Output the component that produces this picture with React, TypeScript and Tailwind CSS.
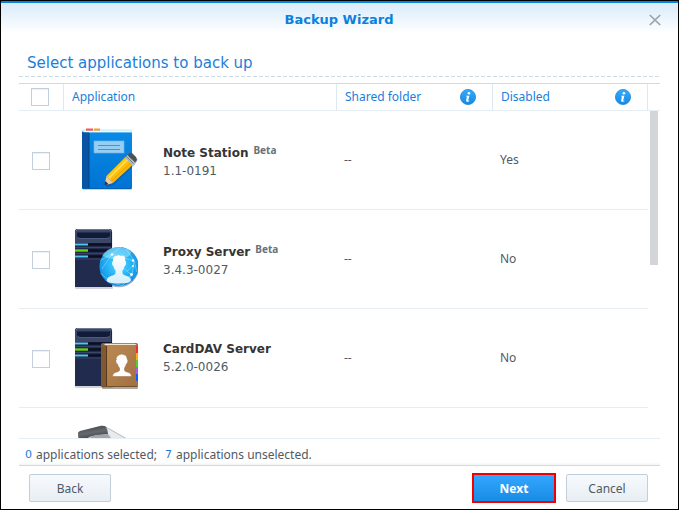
import type { ReactNode } from "react";
import { useState } from "react";

const iconClass = "block size-16 shrink-0";

function NoteIcon() {
  return (
    <svg className={iconClass} viewBox="0 0 64 64" aria-hidden="true">
      <defs>
        <linearGradient id="noteCover" x1="0" y1="0" x2="0" y2="1">
          <stop offset="0" stopColor="#0a8ae6" />
          <stop offset="1" stopColor="#0073d3" />
        </linearGradient>
        <linearGradient id="pencilBody" x1="0" y1="0" x2="1" y2="1">
          <stop offset="0" stopColor="#ffd633" />
          <stop offset="0.5" stopColor="#ffc107" />
          <stop offset="1" stopColor="#f08f00" />
        </linearGradient>
      </defs>
      <rect x="9" y="59" width="49" height="3" rx="1" fill="#9aa3ad" opacity="0.5" />
      <rect x="8" y="1.5" width="50" height="6" rx="1.5" fill="#bfeaf8" />
      <rect x="10" y="2.5" width="47" height="1.5" fill="#e9fbff" />
      <rect x="12" y="0.5" width="7" height="2.2" fill="#f05a5a" />
      <rect x="20" y="0.5" width="6" height="2.2" fill="#f5a02a" />
      <path d="M8 3.5 q1 1 3 1 H58 V59.5 q0 1.5 -1.5 1.5 H9.5 Q8 61 8 59.5z" fill="url(#noteCover)" />
      <path d="M8 3.5 q1 1 3 1 H15 V61 H9.5 Q8 61 8 59.5z" fill="#0755a3" />
      <path d="M15 5V61" stroke="#04478f" strokeWidth="1" />
      <path d="M9 60.5H57" stroke="#0560b8" />
      <rect x="20" y="13" width="30" height="12" fill="#96cdf3" stroke="#72b6e8" strokeWidth="0.6" />
      <path d="M24 17.5H46M24 21.5H46" stroke="#568fba" strokeWidth="1.2" />
      <path d="M32 58 L39 56 L60 36 L63 31" fill="none" stroke="#003d80" strokeWidth="2" opacity="0.3" />
      <path d="M51 29.5 L58.5 37 L39 55 L32.5 48z" fill="url(#pencilBody)" />
      <path d="M53.4 31.8 L34.6 50.3" stroke="#ffe05a" strokeWidth="1.5" />
      <path d="M56.5 35 L37 53.5" stroke="#e89400" strokeWidth="0.8" />
      <path d="M32.5 48 L39 55 L32 57 Q30.5 57 31 55z" fill="#f5c8a0" />
      <path d="M31.4 53 L34.5 56.2 L31.6 57 Q30.5 57 30.8 55.5z" fill="#26303b" />
      <path d="M51 29.5 L53.5 27 L61 34.5 L58.5 37z" fill="#b5bcc3" />
      <path d="M52.2 28.3 L59.8 35.8" stroke="#68717a" strokeWidth="0.8" />
      <path d="M53.5 27 L55.5 25.2 Q57 24.3 58.5 25.4 L62 29 Q63.5 31 62.5 33 L61 34.5z" fill="#4b5157" />
    </svg>
  );
}

function ServerTower() {
  return (
    <>
      <rect x="1" y="58" width="38" height="4" rx="1" fill="#9aa0ab" opacity="0.45" />
      <path d="M1 4.5 Q1 2 3.5 2 H35.5 Q38 2 38 4.5 V60 H1z" fill="#202b4d" />
      <path d="M1 4.5 Q1 2 3.5 2 H35.5 Q38 2 38 4.5 V16 H1z" fill="#3b4668" />
      <path d="M2 4 Q2.5 2.5 4 2.5 H35 Q36.5 2.5 37 4" fill="none" stroke="#6d7896" />
      <path d="M3 5.5 H36 V8 Q36 11 33 11 H6 Q3 11 3 8z" fill="#101b38" />
      <path d="M4 10.5 Q5 11.5 7 11.5 H32 Q34 11.5 35 10.5" fill="none" stroke="#56618a" strokeWidth="0.7" />
      <path d="M1 17.5 H38 M1 23.5 H38 M1 29.5 H38" stroke="#0b1020" strokeWidth="2.4" />
      <path d="M1 20.5 H38 M1 26.5 H38 M1 32 H38" stroke="#39456b" strokeWidth="1" />
      <path d="M1 17.5 H14 M1 29.5 H14" stroke="#4cc9f5" strokeWidth="2" />
      <path d="M1 23.5 H14" stroke="#66d60d" strokeWidth="2.4" />
      <path d="M37.6 5V60" stroke="#131b36" strokeWidth="0.8" />
    </>
  );
}

function ProxyIcon() {
  return (
    <svg className={iconClass} viewBox="0 0 64 64" aria-hidden="true">
      <defs>
        <radialGradient id="proxyGlobe" cx="0.5" cy="0.45" r="0.6">
          <stop offset="0" stopColor="#5fd6ff" />
          <stop offset="0.5" stopColor="#25b6f6" />
          <stop offset="0.85" stopColor="#1495e6" />
          <stop offset="1" stopColor="#0b6cc4" />
        </radialGradient>
        <linearGradient id="proxyPerson" x1="0" y1="0" x2="0" y2="1">
          <stop offset="0" stopColor="#ffffff" />
          <stop offset="1" stopColor="#d5effb" />
        </linearGradient>
        <clipPath id="proxyClip">
          <circle cx="45" cy="39.5" r="20" />
        </clipPath>
      </defs>
      <ServerTower />
      <circle cx="45" cy="40.2" r="20" fill="#0a3d78" opacity="0.4" />
      <circle cx="45" cy="39.5" r="19.5" fill="url(#proxyGlobe)" />
      <g clipPath="url(#proxyClip)">
        <ellipse cx="42" cy="26" rx="15" ry="6" fill="#b7f2ff" opacity="0.45" />
        <path
          d="M24 35 L38 27 L47 20 M38 27 L28 42 M38 27 L60 34 M52 22 L60 34 L63 45 M60 34 L58 48 L46 54 M59 39 L53 44 M58 48 L50 42 M26 46 L36 54 L48 59 L58 48"
          fill="none"
          stroke="#d4f7ff"
          strokeWidth="0.6"
          opacity="0.6"
        />
        <path
          d="M39 31 Q40 28.5 43 29 L44.5 28 L46 28.8 H50 Q51.5 30 51.3 34 Q52.6 34.5 52 37 Q51.6 39 50.5 39.2 Q50 42 48.5 43.5 V46.5 Q49 48 52 48.8 Q56.5 50 57 53 Q57 56.5 45 56.5 Q33 56.5 32.5 53.5 Q33 50 38 48.7 Q41 48 41.5 46.5 V43.5 Q40 42 39.5 39.2 Q38.2 38.5 38 36.5 Q38 34.5 39 34z"
          fill="url(#proxyPerson)"
        />
      </g>
      <g fill="#ffffff">
        <circle cx="38" cy="27.5" r="1.3" />
        <circle cx="59" cy="33.5" r="1.2" />
        <circle cx="59" cy="39" r="1" />
        <circle cx="57.5" cy="47.5" r="1.4" />
      </g>
    </svg>
  );
}

function CardIcon() {
  return (
    <svg className={iconClass} viewBox="0 0 64 64" aria-hidden="true">
      <defs>
        <linearGradient id="cardCover" x1="0" y1="0" x2="1" y2="1">
          <stop offset="0" stopColor="#bd8c55" />
          <stop offset="1" stopColor="#a17040" />
        </linearGradient>
      </defs>
      <ServerTower />
      <rect x="28" y="59" width="36" height="4" rx="1" fill="#4a4038" opacity="0.45" />
      <path d="M27 19 Q27 17 29 17 H62 Q64 17 64 19 V22 H27z" fill="#8f6339" />
      <path d="M31 17.8 H61 L63 19.2 H30z" fill="#f5e8d7" />
      <rect x="60" y="20" width="4" height="7" fill="#ef3030" />
      <rect x="60" y="27" width="4" height="7" fill="#ffac12" />
      <rect x="60" y="34" width="4" height="7" fill="#55cc30" />
      <rect x="60" y="41" width="4" height="7" fill="#a45cf0" />
      <rect x="60" y="48" width="4" height="7" fill="#1960e8" />
      <path d="M27 18.5 Q28 19.4 30 19.4 H60 Q62 19.4 62 21 V55 H64 V60 Q64 61 62.5 61 H28.5 Q27 61 27 59.5z" fill="url(#cardCover)" />
      <path d="M27 18.5 Q28 19.4 32 19.4 V61 H28.5 Q27 61 27 59.5z" fill="#805931" />
      <path d="M32.5 20V61" stroke="#593a20" strokeWidth="1" />
      <path d="M28 60.5H63" stroke="#765027" />
      <path
        d="M42 32.5 Q43 29 46 28.5 Q48 27.5 50 28.8 Q53 29 53.2 33 Q54.3 34 53.7 36 Q53.3 37.7 52.3 38 Q51.8 40.5 50.5 42 V44.5 Q51 45.7 54 46.3 Q57.5 47 57.5 50.5 H38.5 Q38.5 47 42 46.2 Q45 45.5 45.5 44.5 V42 Q43.8 40.5 43.4 38 Q42 37.5 41.8 35.5 Q41.7 34 42.5 33.5z"
        fill="#fdfcfa"
        stroke="#936a3e"
        strokeWidth="0.5"
      />
    </svg>
  );
}

function ScrollIcon() {
  return (
    <svg className={iconClass} viewBox="0 0 64 64" aria-hidden="true">
      <defs>
        <linearGradient id="rollDark" x1="0.3" y1="0" x2="0.6" y2="1">
          <stop offset="0" stopColor="#3f4246" />
          <stop offset="0.4" stopColor="#66696d" />
          <stop offset="1" stopColor="#25282b" />
        </linearGradient>
      </defs>
      <path d="M29 1 L34 3 L53 14 L60 40 H14 L10 14z" fill="#e9eaec" />
      <path d="M31 1.5 L53 14" fill="none" stroke="#a8abae" strokeWidth="0.8" />
      <path d="M4 8 Q4 7 6 6 L27 0.8 Q31 0.5 32 2 Q34 5 34 9 L19 11 Q12 12 11 18 L6 17 Q4 14 4 8z" fill="url(#rollDark)" />
      <path d="M34 9 L22 10 Q15 11 13 17 H40z" fill="#a3a7ab" />
    </svg>
  );
}

function InfoButton({ label }: { label: string }) {
  return (
    <button type="button" aria-label={label} className="block size-4 rounded-full">
      <svg className="size-4" viewBox="0 0 16 16" aria-hidden="true">
        <defs>
          <linearGradient id="infoFill" x1="0" y1="0" x2="0" y2="1">
            <stop offset="0" stopColor="#36a9fb" />
            <stop offset="1" stopColor="#128be6" />
          </linearGradient>
        </defs>
        <circle cx="8" cy="8" r="7.6" fill="url(#infoFill)" stroke="#1481d2" strokeWidth="0.7" />
        <circle cx="8.9" cy="4.3" r="1.3" fill="#fff" />
        <path d="M6.2 6.7 H9.4 L8.2 11.2 Q8.1 12 9.5 11.4 L9.3 12.2 Q6 13.8 6.1 11.4 L7 7.6 H6z" fill="#fff" />
      </svg>
    </button>
  );
}

type Application = {
  name: string;
  version: string;
  beta?: boolean;
  disabled: string;
  icon: ReactNode;
};

const applications: Application[] = [
  { name: "Note Station", version: "1.1-0191", beta: true, disabled: "Yes", icon: <NoteIcon /> },
  { name: "Proxy Server", version: "3.4.3-0027", beta: true, disabled: "No", icon: <ProxyIcon /> },
  { name: "CardDAV Server", version: "5.2.0-0026", disabled: "No", icon: <CardIcon /> },
  { name: "", version: "", disabled: "", icon: <ScrollIcon /> },
];

const TOTAL = 7;

const checkbox =
  "block size-[18px] appearance-none border border-[#c3cfdd] bg-white shadow-[inset_0_1px_1px_#eef1f4] checked:bg-[#2196f3]";
const th = "h-[27px] border-b border-[#e6eef5] p-0 text-left font-normal text-[#1a7edb]";
const thDivided = "border-r border-r-[#dce8f2]";
const td = "h-[99px] border-b border-[#e8edf2]";
const plainButton =
  "h-7 w-[82px] rounded-xs border border-[#c3cedb] bg-linear-to-b from-[#f7fafd] to-[#e8eef3] pt-px text-[#505a64]";

export default function App() {
  const [selected, setSelected] = useState<string[]>([]);
  const toggle = (name: string) =>
    setSelected((now) => (now.includes(name) ? now.filter((n) => n !== name) : [...now, name]));

  return (
    <main className="flex h-screen flex-col border border-black bg-white font-['Noto_Sans',sans-serif] text-xs text-[#505a64]">
      <header className="flex h-9 shrink-0 items-center border-t-2 border-[#0784e3] bg-linear-to-b from-[#d9ebfa] to-white to-90% pr-[17px] pl-7">
        <h1 className="flex-1 text-center font-['DejaVu_Sans',sans-serif] text-[13px] font-bold text-[#0a80df]">
          Backup Wizard
        </h1>
        <button type="button" aria-label="Close">
          <svg className="size-3" viewBox="0 0 12 12" aria-hidden="true">
            <path d="M0.8 1 L11.2 11 M11.2 1 L0.8 11" stroke="#98a3ad" strokeWidth="1.7" />
          </svg>
        </button>
      </header>

      <div className="flex min-h-0 flex-1 flex-col px-[18px]">
        <h2 className="mt-4 pl-2 font-['DejaVu_Sans',sans-serif] text-[15px] leading-5 text-[#1a7edb]">
          Select applications to back up
        </h2>
        <svg className="mt-[3px] h-px w-full shrink-0" aria-hidden="true">
          <line x1="0" y1="0.5" x2="100%" y2="0.5" stroke="#cddbe7" strokeDasharray="4 2" />
        </svg>

        <div className="relative mt-[6px] min-h-0 flex-1 overflow-hidden border-t border-b border-t-[#ccdae5] border-b-[#e6eef5]">
          <table className="w-full table-fixed border-separate border-spacing-0">
            <colgroup>
              <col className="w-[45px]" />
              <col />
              <col className="w-[156px]" />
              <col className="w-[155px]" />
              <col className="w-3" />
            </colgroup>
            <thead>
              <tr>
                <th className={`${th} ${thDivided} pl-3`}>
                  <input
                    type="checkbox"
                    aria-label="Select all applications"
                    className={checkbox}
                    checked={selected.length === TOTAL}
                    readOnly
                  />
                </th>
                <th className={`${th} ${thDivided} pl-2`}>Application</th>
                <th className={`${th} ${thDivided} pr-4 pl-2`}>
                  <div className="flex items-center justify-between">
                    Shared folder <InfoButton label="About shared folders" />
                  </div>
                </th>
                <th className={`${th} ${thDivided} pr-4 pl-2`}>
                  <div className="flex items-center justify-between">
                    Disabled <InfoButton label="About disabled applications" />
                  </div>
                </th>
                <td className={th} />
              </tr>
            </thead>
            <tbody>
              {applications.map((app, index) => (
                <tr key={index}>
                  <td className={`${td} pt-[2px] pl-[13px]`}>
                    <input
                      type="checkbox"
                      id={`app-${index}`}
                      aria-label={app.name || "Application"}
                      className={checkbox}
                      checked={selected.includes(app.name)}
                      onChange={() => toggle(app.name)}
                    />
                  </td>
                  <td className={td}>
                    <label htmlFor={`app-${index}`} className="flex items-center gap-[25px] pl-[10px]">
                      {app.icon}
                      <span className="font-['DejaVu_Sans',sans-serif] leading-[18px]">
                        <span className={app.beta ? "flex gap-[5px] pt-1" : "flex"}>
                          <b className="text-[#353535]">{app.name}</b>
                          {app.beta && (
                            <span className="font-['Noto_Sans',sans-serif] text-[10px] leading-3 font-bold text-[#68717a]">
                              Beta
                            </span>
                          )}
                        </span>
                        <span className="block">{app.version}</span>
                      </span>
                    </label>
                  </td>
                  <td className={`${td} pl-[7px]`}>{app.name && "--"}</td>
                  <td className={`${td} pl-[7px]`}>{app.disabled}</td>
                  <td className="p-0" />
                </tr>
              ))}
            </tbody>
          </table>
          <div className="absolute top-[27px] right-[2px] h-[154px] w-2 bg-[#d3d5d8]" />
        </div>

        <p className="flex h-[27px] shrink-0 items-center gap-1 border-b border-[#d7d9db] bg-linear-to-b from-white from-90% to-[#f2f3f4] pt-[6px] pl-[6px]">
          <span className="font-['DejaVu_Sans',sans-serif] text-[11px] text-[#1a7edb]">{selected.length}</span>
          <span className="mr-1">applications selected;</span>
          <span className="font-['DejaVu_Sans',sans-serif] text-[11px] text-[#1a7edb]">{TOTAL - selected.length}</span>
          <span>applications unselected.</span>
        </p>
      </div>

      <footer className="flex h-[43px] shrink-0 items-center pt-px pr-[30px] pl-7">
        <button type="button" className={plainButton}>
          Back
        </button>
        <button
          type="button"
          className="mr-[10px] ml-auto h-[30px] w-[84px] border-2 border-[#f00000] bg-linear-to-b from-[#33a6ff] to-[#178de6] pt-px font-bold text-white"
        >
          Next
        </button>
        <button type="button" className={plainButton}>
          Cancel
        </button>
      </footer>
    </main>
  );
}
